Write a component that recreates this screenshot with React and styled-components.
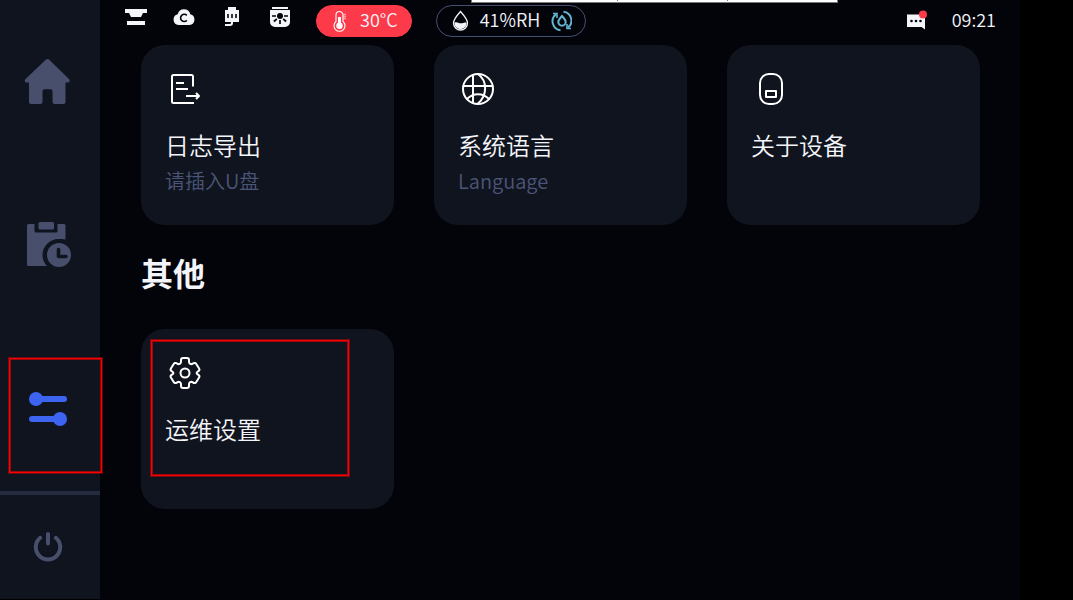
import React from "react";
import styled, { createGlobalStyle, css } from "styled-components";

const color = {
  page: "#000000",
  screen: "#03040a",
  panel: "#10141e",
  line: "#252c3f",
  text: "#f4f5fa",
  muted: "#4b5578",
  icon: "#474f6d",
  accent: "#3c64f0",
  danger: "#fd3a4a",
  mark: "#fb0000",
};

const GlobalStyle = createGlobalStyle`
  *, *::before, *::after { box-sizing: border-box; }
  body {
    margin: 0;
    background: ${color.page};
    color: ${color.text};
    font-family: "Noto Sans CJK SC", "Noto Sans", sans-serif;
  }
  svg { display: block; }
`;

const Device = styled.div`
  position: relative;
  display: flex;
  min-height: 100vh;
  padding-right: 53px;
`;

const Sidebar = styled.nav`
  display: flex;
  flex: none;
  flex-direction: column;
  width: 100px;
  margin-bottom: 1px;
  background: ${color.panel};
`;

const NavButton = styled.button`
  position: relative;
  display: flex;
  flex: ${(p) => p.$grow} 1 0;
  align-items: center;
  justify-content: center;
  padding: 0 4px 0 0;
  border: 0;
  border-top: ${(p) => (p.$divided ? `4px solid ${color.line}` : "0")};
  background: none;
  color: ${(p) => (p.$active ? color.accent : color.icon)};
  cursor: pointer;
`;

const Screen = styled.div`
  display: flex;
  flex: 1;
  flex-direction: column;
  min-width: 0;
  background: ${color.screen};
`;

const StatusBar = styled.header`
  display: flex;
  align-items: center;
  height: 45px;
  padding: 0 24px 4px;
`;

const StatusIcons = styled.div`
  display: flex;
  gap: 24px;
  padding-bottom: 8px;
  margin-right: 24px;
`;

const Pill = styled.div`
  display: flex;
  align-items: center;
  gap: 8px;
  height: 32px;
  margin-right: 24px;
  padding: 0 13px 0 11px;
  border: 1px solid ${(p) => (p.$alert ? color.danger : color.icon)};
  border-radius: 16px;
  background: ${(p) => (p.$alert ? color.danger : "transparent")};
  white-space: nowrap;
`;

const StatusText = styled.span`
  padding-bottom: 4px;
  font-size: 18px;
  font-weight: 350;
  line-height: 26px;
`;

const StatusEnd = styled.div`
  display: flex;
  align-items: center;
  gap: 24px;
  margin-left: auto;
`;

const Content = styled.main`
  padding: 0 40px 40px 41px;
`;

const CardGrid = styled.div`
  display: grid;
  grid-template-columns: repeat(3, minmax(0, 1fr));
  gap: 40px;
`;

const Card = styled.button`
  position: relative;
  display: flex;
  flex-direction: column;
  align-items: flex-start;
  min-height: 180px;
  padding: 24px;
  border: 0;
  border-radius: 24px;
  background: ${color.panel};
  color: ${color.text};
  font-family: inherit;
  font-weight: 350;
  text-align: left;
  cursor: pointer;
`;

const CardTitle = styled.span`
  margin-top: 18px;
  font-size: 24px;
  line-height: 36px;
`;

const CardHint = styled.span`
  color: ${color.muted};
  font-size: 20px;
  line-height: 36px;
`;

const SectionTitle = styled.h2`
  margin: 23px 0 33px;
  font-size: 32px;
  font-weight: 700;
  line-height: 48px;
`;

const markLine = css`
  border: 1px solid ${color.mark};
  box-shadow: 0 0 0 1px rgba(251, 0, 0, 0.4), inset 0 0 0 1px rgba(251, 0, 0, 0.6);
  pointer-events: none;
`;

const NavMark = styled.span`
  position: absolute;
  inset: 30px -2px 18px 9px;
  ${markLine}
`;

const CardMark = styled.span`
  position: absolute;
  top: 11px;
  left: 10px;
  width: 198px;
  height: 136px;
  ${markLine}
`;

const TopStrip = styled.div`
  position: absolute;
  top: 0;
  left: 471px;
  display: grid;
  grid-template-columns: 146fr 110fr 111fr;
  width: 367px;
  height: 3px;
  border: 1px solid #77787c;
  border-top: 0;
  background: #ffffff;
`;

const StripCell = styled.span`
  height: 1px;
  border-left: ${(p) => (p.$first ? "0" : "1px solid #77787c")};
`;

const HomeIcon = () => (
  <svg width="48" height="48" viewBox="0 0 48 48" fill="currentColor" aria-hidden="true">
    <path d="M22 1.600a2.200 2.200 0 0 1 3 0L45.200 21.200c1 1 .6 3.200-1 3.200h-2.700v19.600a2 2 0 0 1-2 2h-9a2 2 0 0 1-2-2V33.200a2 2 0 0 0-2-2h-6a2 2 0 0 0-2 2v10.800a2 2 0 0 1-2 2H7a2 2 0 0 1-2-2V24.400H2.300c-1.600 0-2-2.200-1-3.200z" />
  </svg>
);

const TaskIcon = () => (
  <svg width="48" height="48" viewBox="0 0 48 48" fill="currentColor" aria-hidden="true">
    <g transform="translate(-0.500 -2)">
      <path d="M5 4h6v7a1.500 1.500 0 0 0 1.500 1.500h20A1.500 1.500 0 0 0 34 11V4h6.500A1.500 1.500 0 0 1 42 5.500v14a16 16 0 0 0-18.500 22.200l2 4.300H5a1.500 1.500 0 0 1-1.500-1.500v-39A1.500 1.500 0 0 1 5 4z" />
      <rect x="15" y="2" width="15.500" height="7.500" rx="1.500" />
      <circle cx="35" cy="35" r="16" fill={color.panel} />
      <circle cx="35.500" cy="35" r="12" />
      <path d="M35 29.500v7h7.500" fill="none" stroke={color.panel} strokeWidth="3.600" strokeLinecap="round" strokeLinejoin="round" />
    </g>
  </svg>
);

const SlidersIcon = () => (
  <svg width="40" height="40" viewBox="0 0 40 40" fill="currentColor" aria-hidden="true">
    <rect x="2" y="6" width="37" height="6" rx="3" />
    <circle cx="8" cy="9" r="7" />
    <rect x="1" y="26" width="37" height="6" rx="3" />
    <circle cx="32" cy="29" r="7" />
  </svg>
);

const PowerIcon = () => (
  <svg width="32" height="32" viewBox="0 0 32 32" fill="none" stroke="currentColor" strokeWidth="4" strokeLinecap="round" aria-hidden="true">
    <path d="M16 3v9.500M8.200 6.800a12.200 12.200 0 1 0 15.600 0" />
  </svg>
);

const LidIcon = () => (
  <svg width="24" height="24" viewBox="0 0 24 24" fill={color.text} aria-hidden="true">
    <path d="M1 4h22v4h-4l-2 4H7L5 8H1zM3 16h18v4H3z" />
  </svg>
);

const CloudIcon = () => (
  <svg width="24" height="24" viewBox="0 0 24 24" aria-hidden="true">
    <path d="M6.500 20a5.500 5.500 0 0 1-.8-10.800 6.500 6.500 0 0 1 12.600 0A5.500 5.500 0 0 1 17.500 20z" fill={color.text} />
    <path d="M14.800 10.400a3.600 3.600 0 1 0 0 5" fill="none" stroke={color.screen} strokeWidth="1.600" />
  </svg>
);

const PlugIcon = () => (
  <svg width="24" height="24" viewBox="0 0 24 24" aria-hidden="true">
    <path d="M8 2h8v3h3v12h-6v1a3 3 0 0 1-3 3H5v-2h4.500a1.500 1.500 0 0 0 1.500-1.500V17H5V5h3z" fill={color.text} />
    <path d="M8 9v4M12 9v4M16 9v4" stroke={color.screen} strokeWidth="1.600" />
  </svg>
);

const LampIcon = () => (
  <svg width="24" height="24" viewBox="0 0 24 24" aria-hidden="true">
    <path d="M4 2h16v2H4zM2 5h20v12a5 5 0 0 1-5 5H7a5 5 0 0 1-5-5z" fill={color.text} />
    <circle cx="12" cy="11" r="3" fill={color.screen} />
    <path d="M4 11h4M16 11h4M12 15v4M8.800 14l-3 2.500M15.200 14l3 2.500" stroke={color.screen} strokeWidth="1.700" />
  </svg>
);

const ThermometerIcon = () => (
  <svg width="24" height="24" viewBox="0 0 24 24" fill="none" stroke="#ffffff" aria-hidden="true">
    <path d="M8 12.500V6a3.500 3.500 0 0 1 7 0v6.500a5.500 5.500 0 1 1-7 0z" strokeWidth="1.100" />
    <path d="M11.500 8v7" strokeWidth="3" />
    <circle cx="11.500" cy="16.700" r="3.200" fill="#ffffff" stroke="none" />
    <path d="M15.500 5.500h2.500M15.500 7.500h2.500M15.500 9.500h2.500" strokeWidth="1.400" opacity="0.500" />
  </svg>
);

const HumidityIcon = () => (
  <svg width="24" height="24" viewBox="0 0 24 24" aria-hidden="true">
    <path d="M12.500 2.500c4 4.500 7 8 7 11.500a7 7 0 0 1-14 0C5.500 10.500 8.500 7 12.500 2.500z" fill="none" stroke={color.text} strokeWidth="1.300" />
    <path d="M6.500 13.500c2.500-1 4 .8 6 .8s3.500-.8 6-.8c.3 4-2.700 6.500-6 6.500s-6.300-2.500-6-6.500z" fill={color.text} />
  </svg>
);

const DryCycleIcon = () => (
  <svg width="24" height="24" viewBox="0 0 24 24" fill="none" stroke="#62b4d0" strokeWidth="2" aria-hidden="true">
    <path d="M14 7c2.300 2.500 3.700 4.300 3.700 6a3.700 3.700 0 0 1-7.400 0c0-1.700 1.400-3.500 3.700-6z" />
    <path d="M12.500 21.300A9 9 0 0 1 8 5.300M15.500 2.700a9 9 0 0 1 4.500 16" />
    <path d="M5 4.500h4v4.500M23 19.500h-4V15" strokeWidth="1.600" />
  </svg>
);

const MessageIcon = () => (
  <svg width="24" height="24" viewBox="0 0 24 24" aria-hidden="true">
    <path d="M3 5.500h18v15L17.500 18H3z" fill={color.text} />
    <circle cx="7.500" cy="12" r="1.300" fill={color.screen} />
    <circle cx="12" cy="12" r="1.300" fill={color.screen} />
    <circle cx="16.500" cy="12" r="1.300" fill={color.screen} />
    <circle cx="19" cy="5.500" r="4" fill={color.danger} />
  </svg>
);

const CardSvg = ({ children }) => (
  <svg width="40" height="40" viewBox="0 0 40 40" fill="none" stroke="#ffffff" strokeWidth="2" strokeLinecap="round" strokeLinejoin="round" aria-hidden="true">
    {children}
  </svg>
);

const ExportIcon = () => (
  <CardSvg>
    <path d="M28 17.500V7.500A1.500 1.500 0 0 0 26.500 6H8.500A1.500 1.500 0 0 0 7 7.500v25A1.500 1.500 0 0 0 8.500 34H29" strokeLinecap="butt" />
    <path d="M11 14h8M11 20h12M21 27h13M31 24l3 3-3 3" strokeLinecap="butt" />
  </CardSvg>
);

const GlobeIcon = () => (
  <CardSvg>
    <circle cx="20" cy="20" r="15" />
    <path d="M15 6v28M5.500 17h29M20 5c9.500 7 9.500 21 0 29.500M9 30c6-6.500 16-6.500 22 0" />
  </CardSvg>
);

const DeviceIcon = () => (
  <CardSvg>
    <rect x="9" y="5" width="22" height="30" rx="9" />
    <rect x="15" y="22" width="10" height="6" />
  </CardSvg>
);

const GearIcon = () => (
  <CardSvg>
    <path d="M16 7a2 2 0 0 1 2-2h4a2 2 0 0 1 2 2v2c0 1.500 2 2.700 3.500 1.800l1-.6a2 2 0 0 1 2.800.7l2.800 4.600a2 2 0 0 1-.7 2.700l-1 .6c-1 .6-1 1.800 0 2.400l1 .6a2 2 0 0 1 .7 2.700l-2.800 4.600a2 2 0 0 1-2.800.7l-1-.6C26 28.300 24 29.500 24 31v2a2 2 0 0 1-2 2h-4a2 2 0 0 1-2-2v-2c0-1.500-2-2.700-3.500-1.800l-1 .6a2 2 0 0 1-2.800-.7l-2.800-4.600a2 2 0 0 1 .7-2.700l1-.6c1-.6 1-1.800 0-2.400l-1-.6a2 2 0 0 1-.7-2.700l2.800-4.600a2 2 0 0 1 2.800-.7l1 .6C14 11.700 16 10.500 16 9z" />
    <circle cx="20" cy="20" r="4.500" />
  </CardSvg>
);

export default function App() {
  return (
    <>
      <GlobalStyle />
      <Device>
        <Sidebar>
          <NavButton $grow={164} aria-label="首页"><HomeIcon /></NavButton>
          <NavButton $grow={164} aria-label="任务"><TaskIcon /></NavButton>
          <NavButton $grow={163} $active aria-label="设置">
            <SlidersIcon />
            <NavMark />
          </NavButton>
          <NavButton $grow={104} $divided aria-label="电源"><PowerIcon /></NavButton>
        </Sidebar>
        <Screen>
          <StatusBar>
            <StatusIcons>
              <LidIcon />
              <CloudIcon />
              <PlugIcon />
              <LampIcon />
            </StatusIcons>
            <Pill $alert>
              <ThermometerIcon />
              <StatusText>30°C</StatusText>
            </Pill>
            <Pill>
              <HumidityIcon />
              <StatusText>41%RH</StatusText>
              <DryCycleIcon />
            </Pill>
            <StatusEnd>
              <MessageIcon />
              <StatusText as="time">09:21</StatusText>
            </StatusEnd>
          </StatusBar>
          <Content>
            <CardGrid>
              <Card>
                <ExportIcon />
                <CardTitle>日志导出</CardTitle>
                <CardHint>请插入U盘</CardHint>
              </Card>
              <Card>
                <GlobeIcon />
                <CardTitle>系统语言</CardTitle>
                <CardHint>Language</CardHint>
              </Card>
              <Card>
                <DeviceIcon />
                <CardTitle>关于设备</CardTitle>
              </Card>
            </CardGrid>
            <SectionTitle>其他</SectionTitle>
            <CardGrid>
              <Card>
                <GearIcon />
                <CardTitle>运维设置</CardTitle>
                <CardMark />
              </Card>
            </CardGrid>
          </Content>
        </Screen>
        <TopStrip>
          <StripCell $first />
          <StripCell />
          <StripCell />
        </TopStrip>
      </Device>
    </>
  );
}
